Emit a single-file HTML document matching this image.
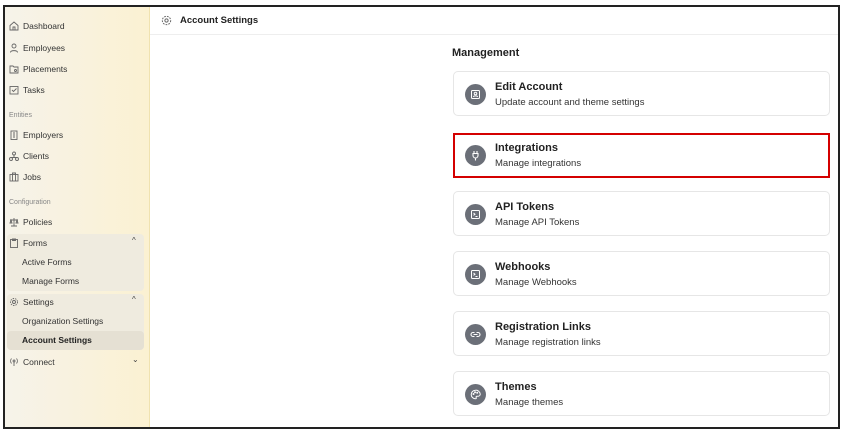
<!DOCTYPE html>
<html><head><meta charset="utf-8"><style>
*{margin:0;padding:0;box-sizing:border-box}
body{width:842px;height:431px;background:#fff;position:relative;overflow:hidden;font-family:"Liberation Sans",sans-serif;color:#222}
.frame{position:absolute;left:3px;top:5px;width:837px;height:424px;border:2px solid #222;overflow:hidden}
.side{position:absolute;left:0;top:0;width:145px;height:100%;background:linear-gradient(90deg,#f6f3ea,#fbf1d2);border-right:1px solid #f0e2b0}
.it{position:absolute;left:4px;font-size:8.5px;color:#333;height:12px;line-height:12px}
.it svg{position:absolute;left:0;top:1px;width:10px;height:10px}
.it span{position:absolute;left:14px;white-space:nowrap}
.lab{position:absolute;left:4px;font-size:7px;color:#888}
.grp{position:absolute;left:2px;width:137px;background:#efebdf;border-radius:4px}
.sub{position:absolute;left:17px;font-size:8.5px;color:#333}
.chev{position:absolute;left:127px;font-size:8px;color:#444}
.hdr{position:absolute;left:145px;top:0;right:0;height:28px;border-bottom:1px solid #eee}
.hdr span{position:absolute;left:30px;top:8px;font-size:9.5px;font-weight:bold}
.mg{position:absolute;left:447px;top:40px;font-size:11px;font-weight:bold}
.card{position:absolute;left:448px;width:377px;height:45px;border:1px solid #e6e6e6;border-radius:5px;background:#fff}
.card.sel{border:2px solid #d40000;border-radius:0;left:448px}
.ic{position:absolute;left:11px;top:12px;width:21px;height:21px;border-radius:50%;background:#6b6f78}
.ic svg{position:absolute;left:5px;top:5px;width:11px;height:11px}
.t{position:absolute;left:41px;top:9px;font-size:11px;font-weight:bold;color:#222}
.s{position:absolute;left:41px;top:25px;font-size:9.5px;color:#333}
</style></head><body>
<div class="frame">
<div class="side">
<svg width="0" height="0"></svg>
<div class="it" style="top:13px"><svg viewBox="0 0 10 10" fill="none" stroke="#666" stroke-width=".9"><path d="M1 4.5L5 1l4 3.5V9H1z M4 9V6h2v3"/></svg><span>Dashboard</span></div>
<div class="it" style="top:35px"><svg viewBox="0 0 10 10" fill="none" stroke="#666" stroke-width=".9"><circle cx="5" cy="3" r="2"/><path d="M1.5 9.5c0-2.5 7-2.5 7 0"/></svg><span>Employees</span></div>
<div class="it" style="top:56px"><svg viewBox="0 0 10 10" fill="none" stroke="#666" stroke-width=".9"><path d="M1 2h3l1 1h4v6H1z"/><circle cx="6.5" cy="6.5" r="1"/></svg><span>Placements</span></div>
<div class="it" style="top:77px"><svg viewBox="0 0 10 10" fill="none" stroke="#666" stroke-width=".9"><rect x="1" y="1.5" width="8" height="7.5"/><path d="M3 5l1.5 1.5L7.5 3.5"/></svg><span>Tasks</span></div>
<div class="lab" style="top:105px">Entities</div>
<div class="it" style="top:122px"><svg viewBox="0 0 10 10" fill="none" stroke="#666" stroke-width=".9"><rect x="2" y="1" width="6" height="8.5"/><path d="M4 3h2M4 5h2M4 7h2"/></svg><span>Employers</span></div>
<div class="it" style="top:143px"><svg viewBox="0 0 10 10" fill="none" stroke="#666" stroke-width=".9"><circle cx="5" cy="2.5" r="1.5"/><circle cx="2" cy="8" r="1.5"/><circle cx="8" cy="8" r="1.5"/><path d="M5 4v2M2 6.5h6"/></svg><span>Clients</span></div>
<div class="it" style="top:164px"><svg viewBox="0 0 10 10" fill="none" stroke="#666" stroke-width=".9"><rect x="1" y="2.5" width="8" height="6.5"/><path d="M3.5 2.5V1h3v1.5M3.5 2.5v6.5M6.5 2.5v6.5"/></svg><span>Jobs</span></div>
<div class="lab" style="top:192px">Configuration</div>
<div class="it" style="top:209px"><svg viewBox="0 0 10 10" fill="none" stroke="#666" stroke-width=".9"><path d="M5 1v8M2 9h6M1 3h8M2 3L1 6h2zM8 3L7 6h2z"/></svg><span>Policies</span></div>
<div class="grp" style="top:227px;height:57px"></div>
<div class="it" style="top:230px"><svg viewBox="0 0 10 10" fill="none" stroke="#666" stroke-width=".9"><rect x="1.5" y="1.5" width="7" height="8"/><path d="M3.5 1h3v1.5h-3z"/></svg><span>Forms</span></div>
<div class="chev" style="top:229px">^</div>
<div class="sub" style="top:250px">Active Forms</div>
<div class="sub" style="top:269px">Manage Forms</div>
<div class="grp" style="top:287px;height:56px"></div>
<div class="grp" style="top:324px;height:19px;background:#e5e0d3"></div>
<div class="it" style="top:289px"><svg viewBox="0 0 10 10" fill="none" stroke="#666" stroke-width=".9"><circle cx="5" cy="5" r="1.5"/><circle cx="5" cy="5" r="3.5" stroke-dasharray="1.5 1"/></svg><span>Settings</span></div>
<div class="chev" style="top:288px">^</div>
<div class="sub" style="top:309px">Organization Settings</div>
<div class="sub" style="top:328px;font-weight:bold;color:#222">Account Settings</div>
<div class="it" style="top:349px"><svg viewBox="0 0 10 10" fill="none" stroke="#666" stroke-width=".9"><circle cx="5" cy="4" r="1"/><path d="M5 5v4M2.5 1.5a4 4 0 000 5M7.5 1.5a4 4 0 010 5"/></svg><span>Connect</span></div>
<div class="chev" style="top:348px">&#8964;</div>
</div>
<div class="hdr"><svg style="position:absolute;left:11px;top:8px" width="11" height="11" viewBox="0 0 10 10" fill="none" stroke="#666" stroke-width=".9"><circle cx="5" cy="5" r="1.5"/><circle cx="5" cy="5" r="3.8" stroke-dasharray="1.6 1"/></svg><span>Account Settings</span></div>
<div class="mg">Management</div>
<div class="card" style="top:64px"><div class="ic"><svg viewBox="0 0 11 11" fill="none" stroke="#fff" stroke-width="1"><rect x="1.5" y="1.5" width="8" height="8" rx="1"/><circle cx="5.5" cy="4.5" r="1.3"/><path d="M3.5 8c0-1.5 4-1.5 4 0"/></svg></div><div class="t">Edit Account</div><div class="s">Update account and theme settings</div></div>
<div class="card sel" style="top:126px"><div class="ic" style="left:10px;top:10px"><svg viewBox="0 0 11 11" fill="none" stroke="#fff" stroke-width="1.1"><path d="M4 1v2.5M7 1v2.5M3 3.5h5v2a2.5 2.5 0 01-5 0zM5.5 8v2.5"/></svg></div><div class="t" style="left:40px;top:7px">Integrations</div><div class="s" style="left:40px;top:23px">Manage integrations</div></div>
<div class="card" style="top:184px"><div class="ic"><svg viewBox="0 0 11 11" fill="none" stroke="#fff" stroke-width="1"><rect x="1.5" y="1.5" width="8" height="8" rx="1"/><path d="M3.5 4l1.5 1.2L3.5 6.4M5.5 7.5h2"/></svg></div><div class="t">API Tokens</div><div class="s">Manage API Tokens</div></div>
<div class="card" style="top:244px"><div class="ic"><svg viewBox="0 0 11 11" fill="none" stroke="#fff" stroke-width="1"><rect x="1.5" y="1.5" width="8" height="8" rx="1"/><path d="M3.5 4l1.5 1.2L3.5 6.4M5.5 7.5h2"/></svg></div><div class="t">Webhooks</div><div class="s">Manage Webhooks</div></div>
<div class="card" style="top:304px"><div class="ic"><svg viewBox="0 0 11 11" fill="none" stroke="#fff" stroke-width="1.1"><path d="M4.5 3.5H3a2 2 0 000 4h1.5M6.5 3.5H8a2 2 0 010 4H6.5M3.5 5.5h4"/></svg></div><div class="t">Registration Links</div><div class="s">Manage registration links</div></div>
<div class="card" style="top:364px"><div class="ic"><svg viewBox="0 0 11 11" fill="none" stroke="#fff" stroke-width="1"><path d="M5.5 1.2a4.3 4.3 0 100 8.6c.8 0 1-.6.7-1.2-.4-.7 0-1.4.8-1.4h1.3a2 2 0 001.9-2A4.3 4.3 0 005.5 1.2z"/><circle cx="3.5" cy="5" r=".5"/><circle cx="5" cy="3.2" r=".5"/><circle cx="7.2" cy="3.8" r=".5"/></svg></div><div class="t">Themes</div><div class="s">Manage themes</div></div>
</div>
</body></html>
